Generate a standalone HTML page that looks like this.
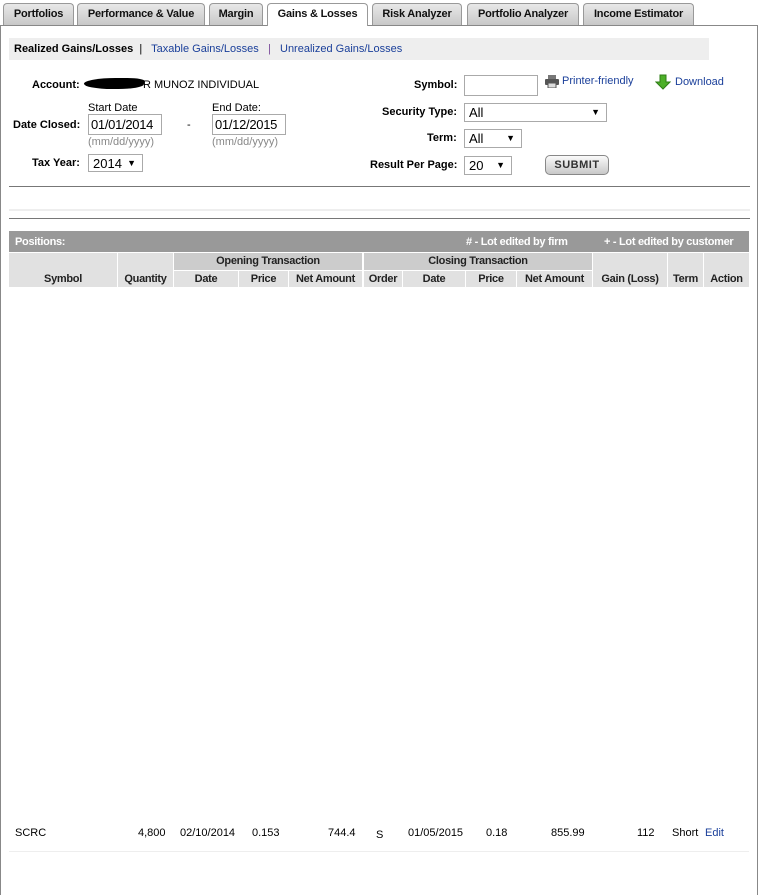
<!DOCTYPE html>
<html><head><style>
*{margin:0;padding:0;box-sizing:border-box}
body{width:759px;height:886px;background:#fff;font-family:"Liberation Sans",Arial,sans-serif;font-size:11px;color:#000;position:relative;overflow:hidden}
.a{position:absolute;white-space:nowrap}
.tab{position:absolute;top:3px;height:22px;border:1px solid #999;border-bottom:none;border-radius:4px 4px 0 0;background:linear-gradient(#e8e8e8,#c8c8c8);font-weight:bold;font-size:11px;text-align:center;line-height:20px;color:#111;letter-spacing:-0.2px}
.tab.on{background:#fff;height:23px;z-index:2}
.b{font-weight:bold}
.lnk{color:#1a3f9a}
.inp{position:absolute;border:1px solid #aaa;background:#fff;font-size:13px;padding:1px 2px;height:21px;line-height:18px;letter-spacing:-0.3px;overflow:hidden}
.sel{position:absolute;border:1px solid #aaa;background:#fff;font-size:13px;padding:0 4px;height:19px;line-height:17px}
.sel i{position:absolute;right:6px;top:0;font-style:normal;font-size:9px}
.hd{position:absolute;background:#e1e1e1;font-weight:bold;font-size:11px;text-align:center;color:#222;letter-spacing:-0.3px}
.gr{color:#888;font-size:11px}
.c{position:absolute;top:827px;font-size:11px}
</style></head><body>
<div class="tab" style="left:3px;width:71px">Portfolios</div>
<div class="tab" style="left:77px;width:128px">Performance &amp; Value</div>
<div class="tab" style="left:209px;width:54px">Margin</div>
<div class="tab on" style="left:267px;width:101px">Gains &amp; Losses</div>
<div class="tab" style="left:372px;width:90px">Risk Analyzer</div>
<div class="tab" style="left:467px;width:112px">Portfolio Analyzer</div>
<div class="tab" style="left:583px;width:111px">Income Estimator</div>
<div class="a" style="left:0;top:25px;width:758px;height:870px;border:1px solid #888;border-bottom:none"></div>

<div class="a" style="left:9px;top:38px;width:700px;height:22px;background:#eee"></div>
<div class="a" style="left:14px;top:43px"><span class="b">Realized Gains/Losses</span> &nbsp;| &nbsp; <span class="lnk">Taxable Gains/Losses</span> &nbsp; <span style="color:#7a4a9a">|</span> &nbsp; <span class="lnk">Unrealized Gains/Losses</span></div>

<div class="a b" style="left:32px;top:79px">Account:</div>
<div class="a" style="left:84px;top:78px;width:60px;height:11px;background:#000;border-radius:50% 30% 40% 50%;transform:skewX(-15deg)"></div>
<div class="a" style="left:143px;top:79px">R MUNOZ INDIVIDUAL</div>
<div class="a" style="left:88px;top:102px">Start Date</div>
<div class="a" style="left:212px;top:102px">End Date:</div>
<div class="a b" style="left:13px;top:119px">Date Closed:</div>
<div class="inp" style="left:88px;top:114px;width:74px">01/01/2014</div>
<div class="a" style="left:187px;top:119px">-</div>
<div class="inp" style="left:212px;top:114px;width:74px">01/12/2015</div>
<div class="a gr" style="left:88px;top:136px">(mm/dd/yyyy)</div>
<div class="a gr" style="left:212px;top:136px">(mm/dd/yyyy)</div>
<div class="a b" style="left:32px;top:157px">Tax Year:</div>
<div class="sel" style="left:88px;top:154px;width:55px;height:18px">2014<i>▼</i></div>

<div class="a b" style="left:414px;top:79px">Symbol:</div>
<div class="a" style="left:464px;top:75px;width:74px;height:21px;border:1px solid #aaa"></div>
<svg class="a" style="left:545px;top:75px" width="14" height="13" viewBox="0 0 14 13"><rect x="3" y="0" width="8" height="4" fill="#777"/><rect x="0" y="4" width="14" height="6" rx="1" fill="#555"/><rect x="3" y="8" width="8" height="5" fill="#ddd" stroke="#555"/></svg>
<div class="a lnk" style="left:562px;top:75px">Printer-friendly</div>
<svg class="a" style="left:655px;top:74px" width="16" height="16" viewBox="0 0 16 16"><path d="M5 1h6v7h4l-7 7-7-7h4z" fill="#4caf28" stroke="#2e7d16"/></svg>
<div class="a lnk" style="left:675px;top:76px">Download</div>
<div class="a b" style="left:382px;top:106px">Security Type:</div>
<div class="sel" style="left:464px;top:103px;width:143px">All<i>▼</i></div>
<div class="a b" style="left:427px;top:132px">Term:</div>
<div class="sel" style="left:464px;top:129px;width:58px">All<i>▼</i></div>
<div class="a b" style="left:370px;top:159px">Result Per Page:</div>
<div class="sel" style="left:464px;top:156px;width:48px">20<i>▼</i></div>
<div class="a b" style="left:545px;top:155px;width:64px;height:20px;border:1px solid #888;border-radius:5px;background:linear-gradient(#fafafa,#c8c8c8);text-align:center;line-height:18px;font-size:11px;color:#333;letter-spacing:.5px">SUBMIT</div>

<div class="a" style="left:9px;top:186px;width:741px;height:1px;background:#777"></div>
<div class="a" style="left:9px;top:209px;width:741px;height:2px;background:#eee"></div>
<div class="a" style="left:9px;top:218px;width:741px;height:1px;background:#777"></div>

<div class="a" style="left:9px;top:231px;width:740px;height:21px;background:#999"></div>
<div class="a b" style="left:15px;top:236px;color:#fff;letter-spacing:-0.3px">Positions:</div>
<div class="a b" style="left:466px;top:236px;color:#fff;letter-spacing:-0.3px"># - Lot edited by firm</div>
<div class="a b" style="left:604px;top:236px;color:#fff;letter-spacing:-0.3px">+ - Lot edited by customer</div>

<div class="hd" style="left:9px;top:253px;width:108px;height:34px;padding-top:20px">Symbol</div>
<div class="hd" style="left:118px;top:253px;width:55px;height:34px;padding-top:20px">Quantity</div>
<div class="hd" style="left:174px;top:253px;width:188px;height:17px;line-height:17px;background:#ccc">Opening Transaction</div>
<div class="hd" style="left:364px;top:253px;width:228px;height:17px;line-height:17px;background:#ccc">Closing Transaction</div>
<div class="hd" style="left:174px;top:271px;width:64px;height:16px;line-height:16px">Date</div>
<div class="hd" style="left:239px;top:271px;width:49px;height:16px;line-height:16px">Price</div>
<div class="hd" style="left:289px;top:271px;width:73px;height:16px;line-height:16px">Net Amount</div>
<div class="hd" style="left:364px;top:271px;width:38px;height:16px;line-height:16px">Order</div>
<div class="hd" style="left:403px;top:271px;width:62px;height:16px;line-height:16px">Date</div>
<div class="hd" style="left:466px;top:271px;width:50px;height:16px;line-height:16px">Price</div>
<div class="hd" style="left:517px;top:271px;width:75px;height:16px;line-height:16px">Net Amount</div>
<div class="hd" style="left:593px;top:253px;width:74px;height:34px;padding-top:20px">Gain (Loss)</div>
<div class="hd" style="left:668px;top:253px;width:35px;height:34px;padding-top:20px">Term</div>
<div class="hd" style="left:704px;top:253px;width:45px;height:34px;padding-top:20px">Action</div>

<div class="c" style="left:15px">SCRC</div>
<div class="c" style="left:138px">4,800</div>
<div class="c" style="left:180px">02/10/2014</div>
<div class="c" style="left:252px">0.153</div>
<div class="c" style="left:328px">744.4</div>
<div class="c" style="left:376px;top:829px">S</div>
<div class="c" style="left:408px">01/05/2015</div>
<div class="c" style="left:486px">0.18</div>
<div class="c" style="left:551px">855.99</div>
<div class="c" style="left:637px">112</div>
<div class="c" style="left:672px">Short</div>
<div class="c lnk" style="left:705px">Edit</div>
<div class="a" style="left:9px;top:851px;width:740px;height:1px;background:#eee"></div>
</body></html>
